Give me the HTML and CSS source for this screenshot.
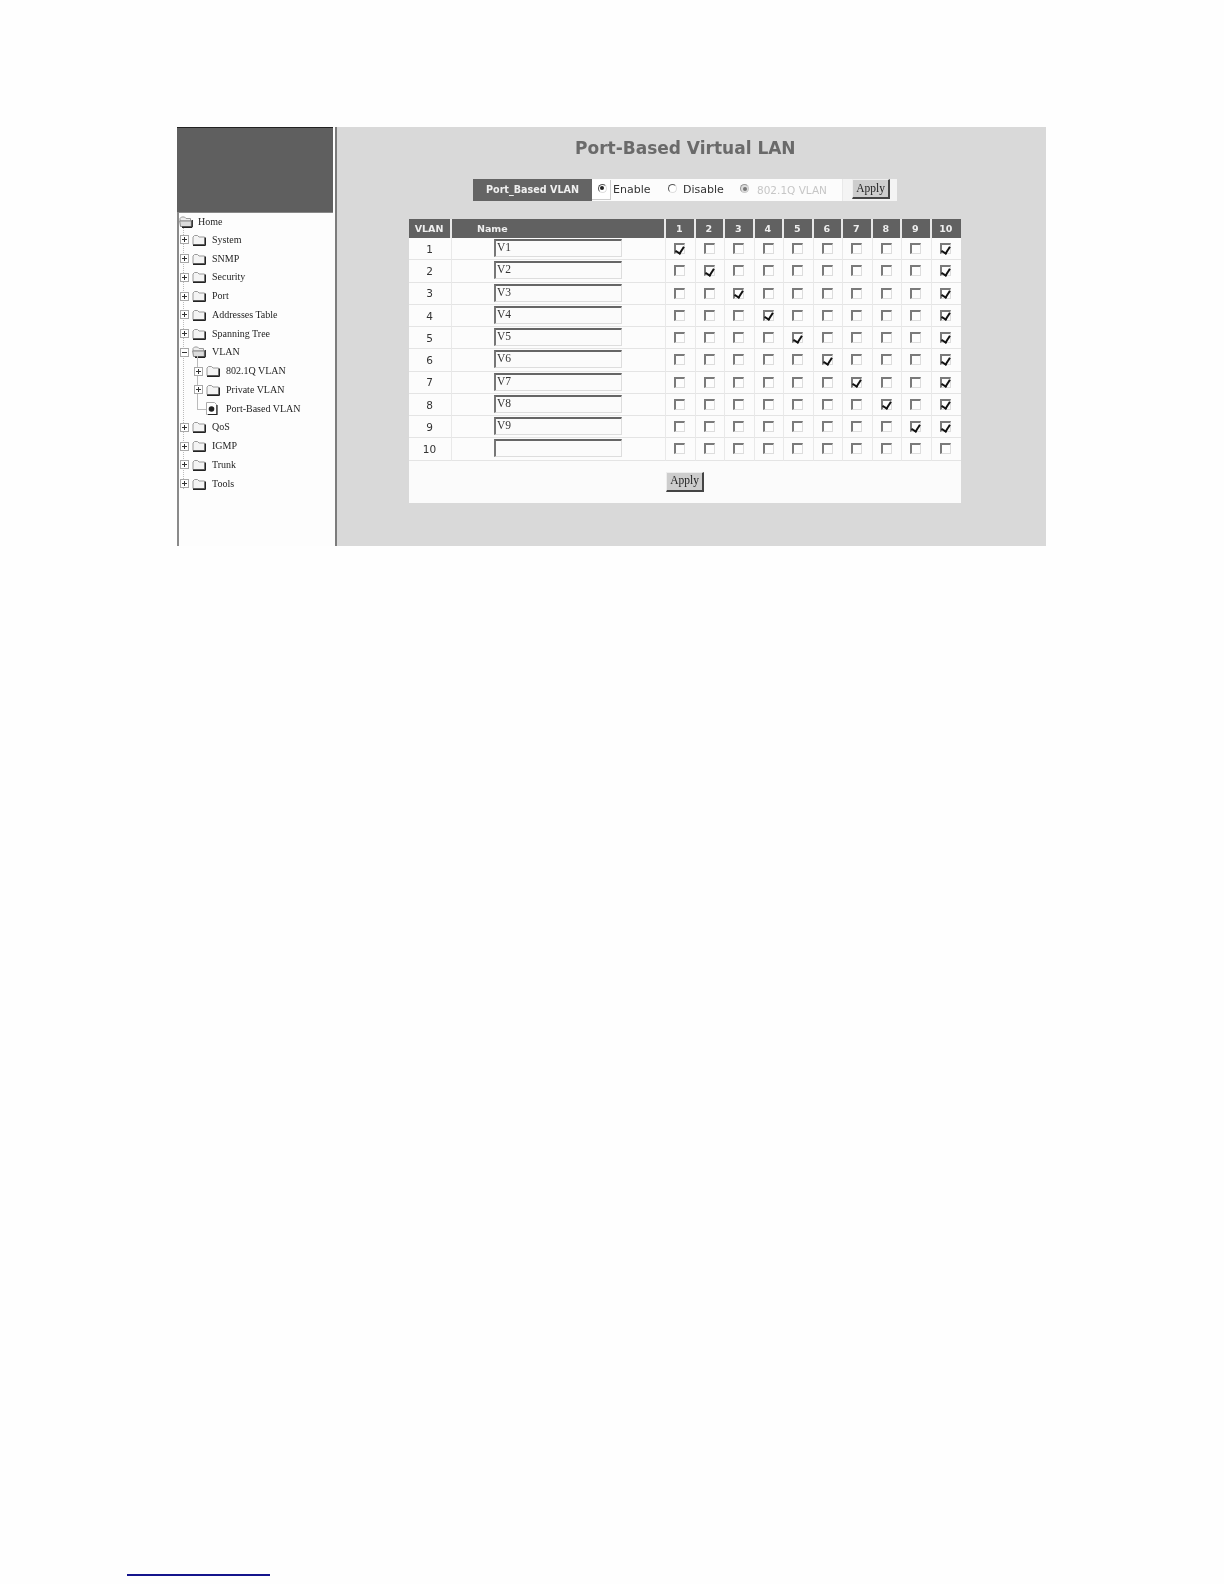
FILE: index.html
```html
<!DOCTYPE html>
<html lang="en">
<head>
<meta charset="utf-8">
<title>Port-Based Virtual LAN</title>
<link rel="stylesheet" href="styles.css">
</head>
<body>
<svg class="sprite" width="0" height="0" aria-hidden="true">
  <symbol id="plus" viewBox="0 0 9 9"><rect x=".5" y=".5" width="8" height="8" fill="#fff" stroke="#a8a8a8"/><path d="M2 4.5h5M4.5 2v5" stroke="#333" fill="none"/></symbol>
  <symbol id="minus" viewBox="0 0 9 9"><rect x=".5" y=".5" width="8" height="8" fill="#fff" stroke="#a8a8a8"/><path d="M2 4.5h5" stroke="#333" fill="none"/></symbol>
  <symbol id="folder" viewBox="0 0 14 12"><path d="M1 3 2.5 1.5h3L7 3h5.5v7.5H1z" fill="#f4f4f4" stroke="#999"/><path d="M1 11.2h12.6M13.4 3.5v7.7" stroke="#222" stroke-width="1.4" fill="none"/></symbol>
  <symbol id="open" viewBox="0 0 14 12"><path d="M1 2.5 2.5 1h3L7 2.5h4.5V5H1z" fill="#eee" stroke="#999"/><path d="M.7 5h11.6v5.5H1.5z" fill="#dcdcdc" stroke="#888"/><path d="M3 11.2h10M13.2 4v7.2" stroke="#222" stroke-width="1.4" fill="none"/></symbol>
  <symbol id="leaf" viewBox="0 0 13 13"><path d="M1.5.5h8l2 2v10h-10z" fill="#fff" stroke="#aaa"/><path d="M12 3v9.6H3" stroke="#222" stroke-width="1.2" fill="none"/><circle cx="6.5" cy="7" r="2.8" fill="#222"/></symbol>
</svg>
<main class="page">
  <div class="shot">
    <aside class="side">
      <div class="side-head"></div>
      <ul class="tree">
        <li class="node node-root"><svg class="ic"><use href="#open"/></svg><span>Home</span></li>
        <li class="node"><svg class="bx"><use href="#plus"/></svg><svg class="ic"><use href="#folder"/></svg><span>System</span></li>
        <li class="node"><svg class="bx"><use href="#plus"/></svg><svg class="ic"><use href="#folder"/></svg><span>SNMP</span></li>
        <li class="node"><svg class="bx"><use href="#plus"/></svg><svg class="ic"><use href="#folder"/></svg><span>Security</span></li>
        <li class="node"><svg class="bx"><use href="#plus"/></svg><svg class="ic"><use href="#folder"/></svg><span>Port</span></li>
        <li class="node"><svg class="bx"><use href="#plus"/></svg><svg class="ic"><use href="#folder"/></svg><span>Addresses Table</span></li>
        <li class="node"><svg class="bx"><use href="#plus"/></svg><svg class="ic"><use href="#folder"/></svg><span>Spanning Tree</span></li>
        <li>
          <div class="node"><svg class="bx"><use href="#minus"/></svg><svg class="ic"><use href="#open"/></svg><span>VLAN</span></div>
          <ul class="sub">
            <li class="node node-sub"><svg class="bx"><use href="#plus"/></svg><svg class="ic"><use href="#folder"/></svg><span>802.1Q VLAN</span></li>
            <li class="node node-sub"><svg class="bx"><use href="#plus"/></svg><svg class="ic"><use href="#folder"/></svg><span>Private VLAN</span></li>
            <li class="node node-leaf"><svg class="lf"><use href="#leaf"/></svg><span>Port-Based VLAN</span></li>
          </ul>
        </li>
        <li class="node"><svg class="bx"><use href="#plus"/></svg><svg class="ic"><use href="#folder"/></svg><span>QoS</span></li>
        <li class="node"><svg class="bx"><use href="#plus"/></svg><svg class="ic"><use href="#folder"/></svg><span>IGMP</span></li>
        <li class="node"><svg class="bx"><use href="#plus"/></svg><svg class="ic"><use href="#folder"/></svg><span>Trunk</span></li>
        <li class="node"><svg class="bx"><use href="#plus"/></svg><svg class="ic"><use href="#folder"/></svg><span>Tools</span></li>
      </ul>
    </aside>
    <section class="content">
      <h1 class="title">Port-Based Virtual LAN</h1>
      <div class="opts">
        <div class="opts-label">Port_Based VLAN</div>
        <span class="radio-box"><span class="radio on"></span></span>
        <span class="opt opt-enable">Enable</span>
        <span class="radio radio-disable"></span>
        <span class="opt opt-disable">Disable</span>
        <span class="radio on off radio-dot1q"></span>
        <span class="opt opt-off">802.1Q VLAN</span>
        <div class="opts-apply"><button class="btn" type="button">Apply</button></div>
      </div>
      <div class="panel">
        <table class="grid">
          <thead>
            <tr><th class="c-vlan">VLAN</th><th class="c-name"><span class="name-h">Name</span></th><th>1</th><th>2</th><th>3</th><th>4</th><th>5</th><th>6</th><th>7</th><th>8</th><th>9</th><th>10</th></tr>
          </thead>
          <tbody>
            <tr><td>1</td><td><input class="name" value="V1"></td><td><i class="cb on"></i></td><td><i class="cb"></i></td><td><i class="cb"></i></td><td><i class="cb"></i></td><td><i class="cb"></i></td><td><i class="cb"></i></td><td><i class="cb"></i></td><td><i class="cb"></i></td><td><i class="cb"></i></td><td><i class="cb on"></i></td></tr>
            <tr><td>2</td><td><input class="name" value="V2"></td><td><i class="cb"></i></td><td><i class="cb on"></i></td><td><i class="cb"></i></td><td><i class="cb"></i></td><td><i class="cb"></i></td><td><i class="cb"></i></td><td><i class="cb"></i></td><td><i class="cb"></i></td><td><i class="cb"></i></td><td><i class="cb on"></i></td></tr>
            <tr><td>3</td><td><input class="name" value="V3"></td><td><i class="cb"></i></td><td><i class="cb"></i></td><td><i class="cb on"></i></td><td><i class="cb"></i></td><td><i class="cb"></i></td><td><i class="cb"></i></td><td><i class="cb"></i></td><td><i class="cb"></i></td><td><i class="cb"></i></td><td><i class="cb on"></i></td></tr>
            <tr><td>4</td><td><input class="name" value="V4"></td><td><i class="cb"></i></td><td><i class="cb"></i></td><td><i class="cb"></i></td><td><i class="cb on"></i></td><td><i class="cb"></i></td><td><i class="cb"></i></td><td><i class="cb"></i></td><td><i class="cb"></i></td><td><i class="cb"></i></td><td><i class="cb on"></i></td></tr>
            <tr><td>5</td><td><input class="name" value="V5"></td><td><i class="cb"></i></td><td><i class="cb"></i></td><td><i class="cb"></i></td><td><i class="cb"></i></td><td><i class="cb on"></i></td><td><i class="cb"></i></td><td><i class="cb"></i></td><td><i class="cb"></i></td><td><i class="cb"></i></td><td><i class="cb on"></i></td></tr>
            <tr><td>6</td><td><input class="name" value="V6"></td><td><i class="cb"></i></td><td><i class="cb"></i></td><td><i class="cb"></i></td><td><i class="cb"></i></td><td><i class="cb"></i></td><td><i class="cb on"></i></td><td><i class="cb"></i></td><td><i class="cb"></i></td><td><i class="cb"></i></td><td><i class="cb on"></i></td></tr>
            <tr><td>7</td><td><input class="name" value="V7"></td><td><i class="cb"></i></td><td><i class="cb"></i></td><td><i class="cb"></i></td><td><i class="cb"></i></td><td><i class="cb"></i></td><td><i class="cb"></i></td><td><i class="cb on"></i></td><td><i class="cb"></i></td><td><i class="cb"></i></td><td><i class="cb on"></i></td></tr>
            <tr><td>8</td><td><input class="name" value="V8"></td><td><i class="cb"></i></td><td><i class="cb"></i></td><td><i class="cb"></i></td><td><i class="cb"></i></td><td><i class="cb"></i></td><td><i class="cb"></i></td><td><i class="cb"></i></td><td><i class="cb on"></i></td><td><i class="cb"></i></td><td><i class="cb on"></i></td></tr>
            <tr><td>9</td><td><input class="name" value="V9"></td><td><i class="cb"></i></td><td><i class="cb"></i></td><td><i class="cb"></i></td><td><i class="cb"></i></td><td><i class="cb"></i></td><td><i class="cb"></i></td><td><i class="cb"></i></td><td><i class="cb"></i></td><td><i class="cb on"></i></td><td><i class="cb on"></i></td></tr>
            <tr><td>10</td><td><input class="name" value=""></td><td><i class="cb"></i></td><td><i class="cb"></i></td><td><i class="cb"></i></td><td><i class="cb"></i></td><td><i class="cb"></i></td><td><i class="cb"></i></td><td><i class="cb"></i></td><td><i class="cb"></i></td><td><i class="cb"></i></td><td><i class="cb"></i></td></tr>
          </tbody>
        </table>
        <div class="panel-foot"><button class="btn" type="button">Apply</button></div>
      </div>
    </section>
  </div>
  <div class="footnote-rule"></div>
</main>
</body>
</html>
```

FILE: styles.css
```css
* { box-sizing: border-box; }
html, body { margin: 0; padding: 0; background: #fefefe; }
.sprite { display: block; height: 0; }
.page { padding: 127px 0 0 177px; height: 1584px; overflow: hidden; }

.shot { display: flex; width: 869px; height: 419px; filter: blur(.55px); }

/* sidebar */
.side { width: 160px; flex: none; display: flex; flex-direction: column; background: #fdfdfd; border-right: 2px solid #7c7c7c; }
.side-head { height: 86px; flex: none; background: #5f5f5f; border-top: 1px solid #222; border-bottom: 1px solid #888; margin-right: 2px; }
.tree { position: relative; flex: 1; margin: 0; padding: 0; list-style: none; border-left: 2px solid #8a8a8a; font: 10px/1 "Liberation Serif", serif; color: #1e1e1e; }
.tree::before { content: ""; position: absolute; left: 4px; top: 14px; height: 262px; border-left: 1px dotted #bbb; }
.tree ul { margin: 0; padding: 0; list-style: none; }
.sub { position: relative; }
.sub::before { content: ""; position: absolute; left: 18px; top: -6px; height: 53px; width: 8px; border-left: 1px solid #bbb; border-bottom: 1px solid #bbb; }
.node { position: relative; display: flex; align-items: center; height: 18.75px; padding-left: 1px; white-space: nowrap; }
.node-root { height: 17.6px; gap: 5px; padding-left: 0; }
.node-sub { padding-left: 15px; }
.node-leaf { padding-left: 26px; }
.bx { width: 9px; height: 9px; flex: none; margin-right: 3px; }
.ic { width: 14px; height: 12px; flex: none; margin-right: 6px; }
.node-root .ic { margin-right: 0; }
.lf { width: 13px; height: 13px; flex: none; margin-right: 8px; }

/* content */
.content { flex: 1; background: #d9d9d9; padding-left: 72px; }
.title { margin: 0; padding-left: 166px; height: 52px; font: bold 17px/42px "DejaVu Sans", sans-serif; color: #6a6a6a; white-space: nowrap; }
.opts { display: flex; align-items: center; width: 424px; height: 22px; margin-left: 64px; background: #fcfcfc; font: 11px/22px "DejaVu Sans", sans-serif; color: #333; }
.opts-label { width: 119px; height: 22px; flex: none; background: #646464; color: #f0f0f0; font: bold 9.6px/22px "DejaVu Sans", sans-serif; text-align: center; }
.radio-box { display: flex; align-items: center; justify-content: center; width: 19px; height: 20px; flex: none; background: #fff; border-right: 1px solid #ccc; border-bottom: 1px solid #ccc; padding-left: 2px; padding-bottom: 3px; }
.radio { position: relative; display: block; width: 9px; height: 9px; flex: none; border-radius: 50%; background: #fff; border: 1px solid #ddd; border-top-color: #555; border-left-color: #555; }
.radio.on::after { content: ""; position: absolute; left: 1.5px; top: 1.5px; width: 4px; height: 4px; border-radius: 50%; background: #222; }
.radio.off { background: #ddd; border-color: #999 #ccc #ccc #999; }
.radio.off::after { background: #777; }
.opt-enable { margin-left: 2px; width: 37px; }
.radio-disable { margin-left: 18px; margin-top: -3px; }
.opt-disable { margin-left: 6px; width: 39px; }
.radio-dot1q { margin-left: 18px; margin-top: -3px; }
.opt-off { margin-left: 8px; width: 69px; font-size: 10.5px; color: #c6c6c6; white-space: nowrap; }
.opts-apply { display: flex; align-items: center; height: 22px; margin-left: 16px; padding: 0 0 2px 9px; flex: 1; background: #f4f4f4; border-left: 1px solid #e9e9e9; }

.btn { display: block; width: 38px; height: 20px; padding: 0; background: #cdcdcd; border: 1px solid; border-color: #eee #444 #444 #eee; border-width: 1px 2px 2px 1px; font: 11.5px/1 "Liberation Serif", serif; color: #222; }

.panel { width: 552px; margin-top: 18px; background: #fbfbfb; }
.grid { width: 552px; table-layout: fixed; border-collapse: separate; border-spacing: 0; }
.grid th { height: 19px; padding: 0 1px 0 0; background: #616161; color: #eee; font: bold 9.5px/1 "DejaVu Sans", sans-serif; border-right: 2px solid #e8e8e8; text-align: center; }
.grid th:last-child, .grid td:last-child { border-right: 0; }
.grid .c-vlan { width: 43px; }
.grid .c-name { width: 214px; text-align: left; }
.name-h { padding-left: 25px; }
.grid td { height: 22.25px; padding: 1px 1px 0 0; background: #fcfcfc; border-right: 1px solid #e9e9e9; border-bottom: 1px solid #e4e4e4; text-align: center; font: 10.5px/1 "DejaVu Sans", sans-serif; color: #333; }
.name { display: block; width: 128px; height: 18px; margin: -1px 0 1px 42px; padding: 0 0 3px 1px; background: #fbfbfb; border: 1px solid #ddd; border-top: 2px solid #666; border-left: 2px solid #777; border-radius: 0; font: 11.5px/1 "Liberation Serif", serif; color: #333; }
.cb { position: relative; display: block; width: 11px; height: 11px; margin: -1px auto 0; background: #fdfdfd; border: 1px solid #ddd; border-top: 2px solid #7a7a7a; border-left: 2px solid #7a7a7a; }
.cb.on::after { content: ""; position: absolute; left: 1px; top: -.5px; width: 4px; height: 6.5px; border: solid #111; border-width: 0 2.2px 2.2px 0; transform: rotate(32deg); }
.panel-foot { display: flex; justify-content: center; height: 42px; padding: 11px 0 0; }

.footnote-rule { width: 143px; height: 1.5px; margin: 1028px 0 0 -50px; background: #14148c; }
```
